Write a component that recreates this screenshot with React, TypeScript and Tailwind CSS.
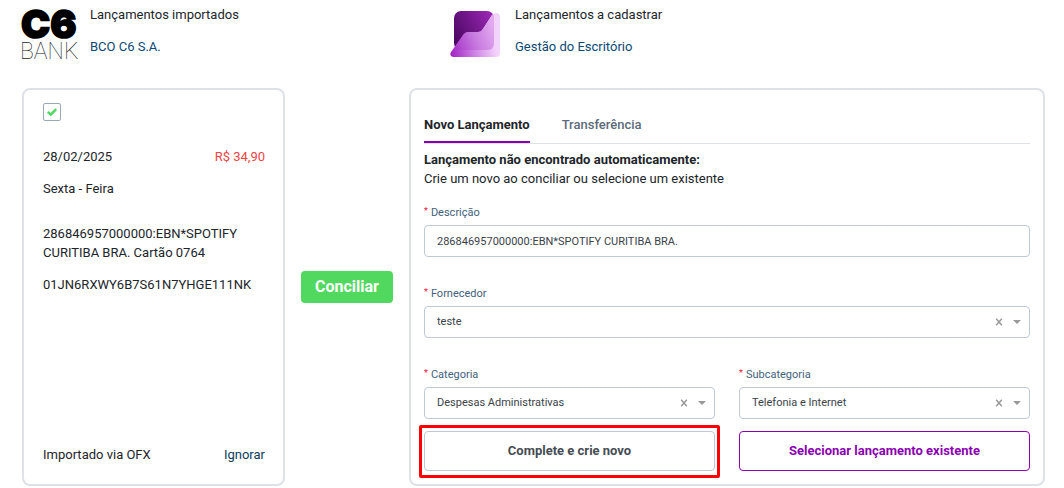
import React, { useState } from "react";

const fieldBox =
  "flex h-8 w-full items-center rounded-[4px] border border-[#bfc9d4] bg-white text-[11px] text-[#3b4248]";

function FieldLabel({ htmlFor, children }: { htmlFor: string; children: React.ReactNode }) {
  return (
    <label htmlFor={htmlFor} className="mb-1 flex gap-[3px] text-[11px] leading-4 text-[#43617d]">
      <span className="text-[9px] leading-3 text-[#f0143c]">*</span>
      {children}
    </label>
  );
}

function SelectField({ id, label, initial }: { id: string; label: string; initial: string }) {
  const [value, setValue] = useState(initial);
  return (
    <div className="min-w-0">
      <FieldLabel htmlFor={id}>{label}</FieldLabel>
      <div className={fieldBox}>
        <select
          id={id}
          value={value}
          onChange={(e) => setValue(e.target.value)}
          className="h-full min-w-0 flex-1 appearance-none bg-transparent pl-3 outline-none"
        >
          <option value="" />
          <option value={initial}>{initial}</option>
        </select>
        <button
          type="button"
          aria-label={`Limpar ${label}`}
          onClick={() => setValue("")}
          className="flex h-4 w-4 items-center justify-center text-[#999999]"
        >
          <svg width="8" height="8" viewBox="0 0 8 8" stroke="currentColor" strokeWidth="1.5" fill="none">
            <path d="M1.200 0.800 L6.800 7.200 M6.800 0.800 L1.200 7.200" />
          </svg>
        </button>
        <svg className="mr-2 ml-[6px]" width="8" height="4" viewBox="0 0 8 4" fill="#999999">
          <path d="M0 0 H8 L4 4 Z" />
        </svg>
      </div>
    </div>
  );
}

function BankLogo() {
  return (
    <svg className="overflow-visible" width="57" height="52" viewBox="0 0 57 52" role="img" aria-label="C6 Bank">
      <text x="-1" y="30" fontFamily="Inter" fontWeight="900" fontSize="39" fill="#000" stroke="#000" strokeWidth="1.6">
        C6
      </text>
      <text x="-2" y="51" fontFamily="Roboto" fontWeight="100" fontSize="23" fill="#222">
        BANK
      </text>
    </svg>
  );
}

function OfficeLogo() {
  return (
    <svg width="50" height="46" viewBox="0 0 50 46" aria-hidden="true">
      <defs>
        <linearGradient id="dark" gradientUnits="userSpaceOnUse" x1="4" y1="28" x2="42" y2="8">
          <stop offset="0" stopColor="#4b0763" />
          <stop offset="1" stopColor="#9626b0" />
        </linearGradient>
        <linearGradient id="light" gradientUnits="userSpaceOnUse" x1="0" y1="44" x2="50" y2="34">
          <stop offset="0" stopColor="#a01fc2" />
          <stop offset="0.5" stopColor="#cf86e6" />
          <stop offset="0.9" stopColor="#f3d3fb" />
        </linearGradient>
        <linearGradient id="inner" gradientUnits="userSpaceOnUse" x1="4" y1="36" x2="44" y2="16">
          <stop offset="0" stopColor="#a838ca" />
          <stop offset="0.5" stopColor="#c678de" />
          <stop offset="1" stopColor="#dfa2f0" />
        </linearGradient>
        <clipPath id="fold">
          <path d="M1 41 L13.500 23.500 Q15.200 21 18 21 H28 Q31 21 32.500 18.500 L42 4 Q43.500 2 46 2 Q50 2 50 6 V42 Q50 46 46 46 H3 Q-1 45 1 41 Z" />
        </clipPath>
      </defs>
      <rect x="4" y="0" width="40" height="39" rx="7" fill="url(#dark)" />
      <g clipPath="url(#fold)">
        <rect width="50" height="46" fill="url(#light)" />
        <rect x="4" y="0" width="40" height="39" rx="6" fill="url(#inner)" opacity="0.85" />
      </g>
    </svg>
  );
}

export default function App() {
  const [checked, setChecked] = useState(true);
  const [description, setDescription] = useState("286846957000000:EBN*SPOTIFY CURITIBA BRA.");

  return (
    <main className="bg-white pt-[5px] pr-[19px] pb-[2px] pl-[22px] font-[Roboto,'Liberation_Sans',sans-serif] text-[13px] leading-5 text-[#212529]">
      <header className="grid grid-cols-[428fr_595fr]">
        <div className="flex gap-3">
          <div className="w-14 pt-[3px]">
            <BankLogo />
          </div>
          <div>
            <p>Lançamentos importados</p>
            <a href="#banco" className="mt-3 block text-[#0b4875]">
              BCO C6 S.A.
            </a>
          </div>
        </div>
        <div className="flex gap-[15px]">
          <div className="pt-[6px]">
            <OfficeLogo />
          </div>
          <div>
            <p>Lançamentos a cadastrar</p>
            <a href="#gestao" className="mt-3 block text-[#0b4875]">
              Gestão do Escritório
            </a>
          </div>
        </div>
      </header>

      <div className="mt-7 grid grid-cols-[263fr_92px_636fr] gap-4">
        <section className="flex flex-col rounded-[8px] border-2 border-[#dee2e6] pt-[13px] pr-[18px] pb-[19px] pl-[19px]">
          <label className="relative block h-[18px] w-[18px]">
            <input
              type="checkbox"
              aria-label="Selecionar lançamento"
              checked={checked}
              onChange={(e) => setChecked(e.target.checked)}
              className="block h-[18px] w-[18px] appearance-none rounded-[2px] border border-[#9aa8b8] bg-white"
            />
            {checked && (
              <svg
                className="pointer-events-none absolute inset-0"
                width="18"
                height="18"
                viewBox="0 0 18 18"
                fill="none"
                stroke="#4fd860"
                strokeWidth="2.4"
              >
                <path d="M4.800 8.800 L7.800 11.600 L13.200 6.200" />
              </svg>
            )}
          </label>
          <div className="mt-[26px] flex justify-between">
            <span>28/02/2025</span>
            <span className="text-[#ef4444]">R$ 34,90</span>
          </div>
          <p className="mt-3">Sexta - Feira</p>
          <p className="mt-[25px] leading-[19px]">286846957000000:EBN*SPOTIFY CURITIBA BRA. Cartão 0764</p>
          <p className="mt-[13px]">01JN6RXWY6B7S61N7YHGE111NK</p>
          <div className="mt-auto flex justify-between">
            <span>Importado via OFX</span>
            <a href="#ignorar" className="text-[#0b3c5d]">
              Ignorar
            </a>
          </div>
        </section>

        <button
          type="button"
          className="h-8 self-center rounded-[4px] bg-[#51d95f] text-base leading-8 font-bold text-white"
        >
          Conciliar
        </button>

        <section className="rounded-[8px] border-2 border-[#dee2e6] p-[13px]">
          <div role="tablist" className="mt-3 flex gap-8 border-b border-[#dee2e6] font-medium">
            <button role="tab" aria-selected="true" type="button" className="border-b-2 border-[#8a00b0] pb-[6px] font-bold">
              Novo Lançamento
            </button>
            <button role="tab" aria-selected="false" type="button" className="border-b-2 border-transparent pb-[6px] text-[#5b6b7b]">
              Transferência
            </button>
          </div>
          <div className="mt-[6px] leading-[19px]">
            <p className="font-bold">Lançamento não encontrado automaticamente:</p>
            <p>Crie um novo ao conciliar ou selecione um existente</p>
          </div>

          <form className="mt-[17px]" onSubmit={(e) => e.preventDefault()}>
            <FieldLabel htmlFor="descricao">Descrição</FieldLabel>
            <input
              id="descricao"
              type="text"
              value={description}
              onChange={(e) => setDescription(e.target.value)}
              className={`${fieldBox} px-3 outline-none`}
            />
            <div className="mt-[29px]">
              <SelectField id="fornecedor" label="Fornecedor" initial="teste" />
            </div>
            <div className="mt-[29px] grid grid-cols-2 gap-x-6 gap-y-3">
              <SelectField id="categoria" label="Categoria" initial="Despesas Administrativas" />
              <SelectField id="subcategoria" label="Subcategoria" initial="Telefonia e Internet" />
              <div className="relative">
                <button
                  type="button"
                  className="h-10 w-full rounded-[4px] border border-[#bfc9d4] font-bold text-[#454c54]"
                >
                  Complete e crie novo
                </button>
                <div className="pointer-events-none absolute -inset-x-[5px] -top-[6px] -bottom-[7px] rounded-[2px] border-3 border-[#ff0000]" />
              </div>
              <button
                type="button"
                className="h-10 w-full rounded-[4px] border border-[#8a00b0] font-bold text-[#8a00b0]"
              >
                Selecionar lançamento existente
              </button>
            </div>
          </form>
        </section>
      </div>
    </main>
  );
}
